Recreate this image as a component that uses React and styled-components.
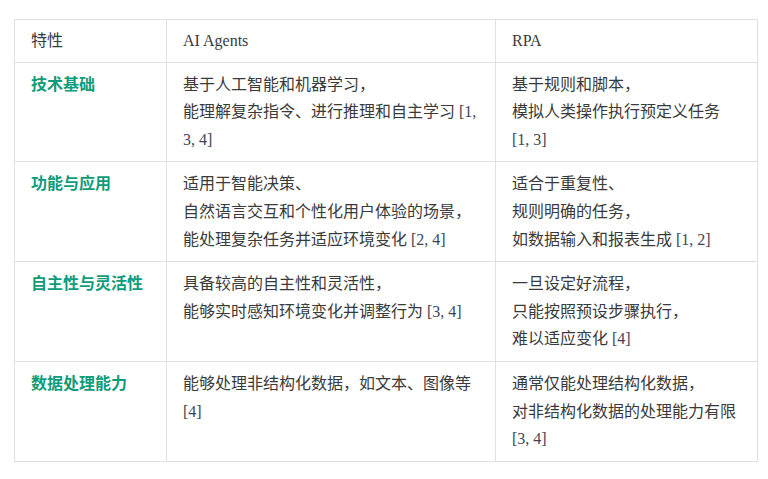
import React from 'react';
import styled, { createGlobalStyle } from 'styled-components';

const rows = [
  {
    name: '技术基础',
    ai: [['基于人工智能和机器学习，'], ['能理解复杂指令、进行推理和自主学习 ', '[1,'], [null, '3, 4]']],
    rpa: [['基于规则和脚本，'], ['模拟人类操作执行预定义任务'], [null, '[1, 3]']],
  },
  {
    name: '功能与应用',
    ai: [['适用于智能决策、'], ['自然语言交互和个性化用户体验的场景，'], ['能处理复杂任务并适应环境变化 ', '[2, 4]']],
    rpa: [['适合于重复性、'], ['规则明确的任务，'], ['如数据输入和报表生成 ', '[1, 2]']],
  },
  {
    name: '自主性与灵活性',
    ai: [['具备较高的自主性和灵活性，'], ['能够实时感知环境变化并调整行为 ', '[3, 4]']],
    rpa: [['一旦设定好流程，'], ['只能按照预设步骤执行，'], ['难以适应变化 ', '[4]']],
  },
  {
    name: '数据处理能力',
    ai: [['能够处理非结构化数据，如文本、图像等'], [null, '[4]']],
    rpa: [['通常仅能处理结构化数据，'], ['对非结构化数据的处理能力有限'], [null, '[3, 4]']],
  },
];

function Lines({ lines }) {
  return lines.map(([text, cite], i) => (
    <Line key={i}>
      {text}
      {cite && <Cite>{cite}</Cite>}
    </Line>
  ));
}

export default function App() {
  return (
    <>
      <Global />
      <Page>
        <Table>
          <colgroup>
            <col style={{ width: 152 }} />
            <col style={{ width: 329 }} />
            <col style={{ width: 262 }} />
          </colgroup>
          <thead>
            <tr>
              <Th>特性</Th>
              <Th>AI Agents</Th>
              <Th>RPA</Th>
            </tr>
          </thead>
          <tbody>
            {rows.map((r) => (
              <tr key={r.name}>
                <Td><Name>{r.name}</Name></Td>
                <Td><Lines lines={r.ai} /></Td>
                <Td><Lines lines={r.rpa} /></Td>
              </tr>
            ))}
          </tbody>
        </Table>
      </Page>
    </>
  );
}

const Global = createGlobalStyle`
  body {
    margin: 0;
    background: #fff;
  }
`

const Page = styled.div`
  padding: 19px 11px 0 14px;
  font-family: "Liberation Serif", "Noto Sans CJK SC", serif;
  font-size: 16px;
  line-height: 27.6px;
  color: #3a3a3a;
`

const Table = styled.table`
  width: 743px;
  border-collapse: collapse;
  table-layout: fixed;
`

const Th = styled.th`
  border: 1px solid #e0e0e0;
  padding: 7px 16px;
  text-align: left;
  font-weight: normal;
  vertical-align: middle;
`

const Td = styled.td`
  border: 1px solid #e0e0e0;
  padding: 8px 16px;
  vertical-align: top;
`

const Name = styled.strong`
  color: #109b79;
  font-weight: bold;
`

const Line = styled.div`
  white-space: nowrap;
`

const Cite = styled.span`
  color: #3c4658;
`
